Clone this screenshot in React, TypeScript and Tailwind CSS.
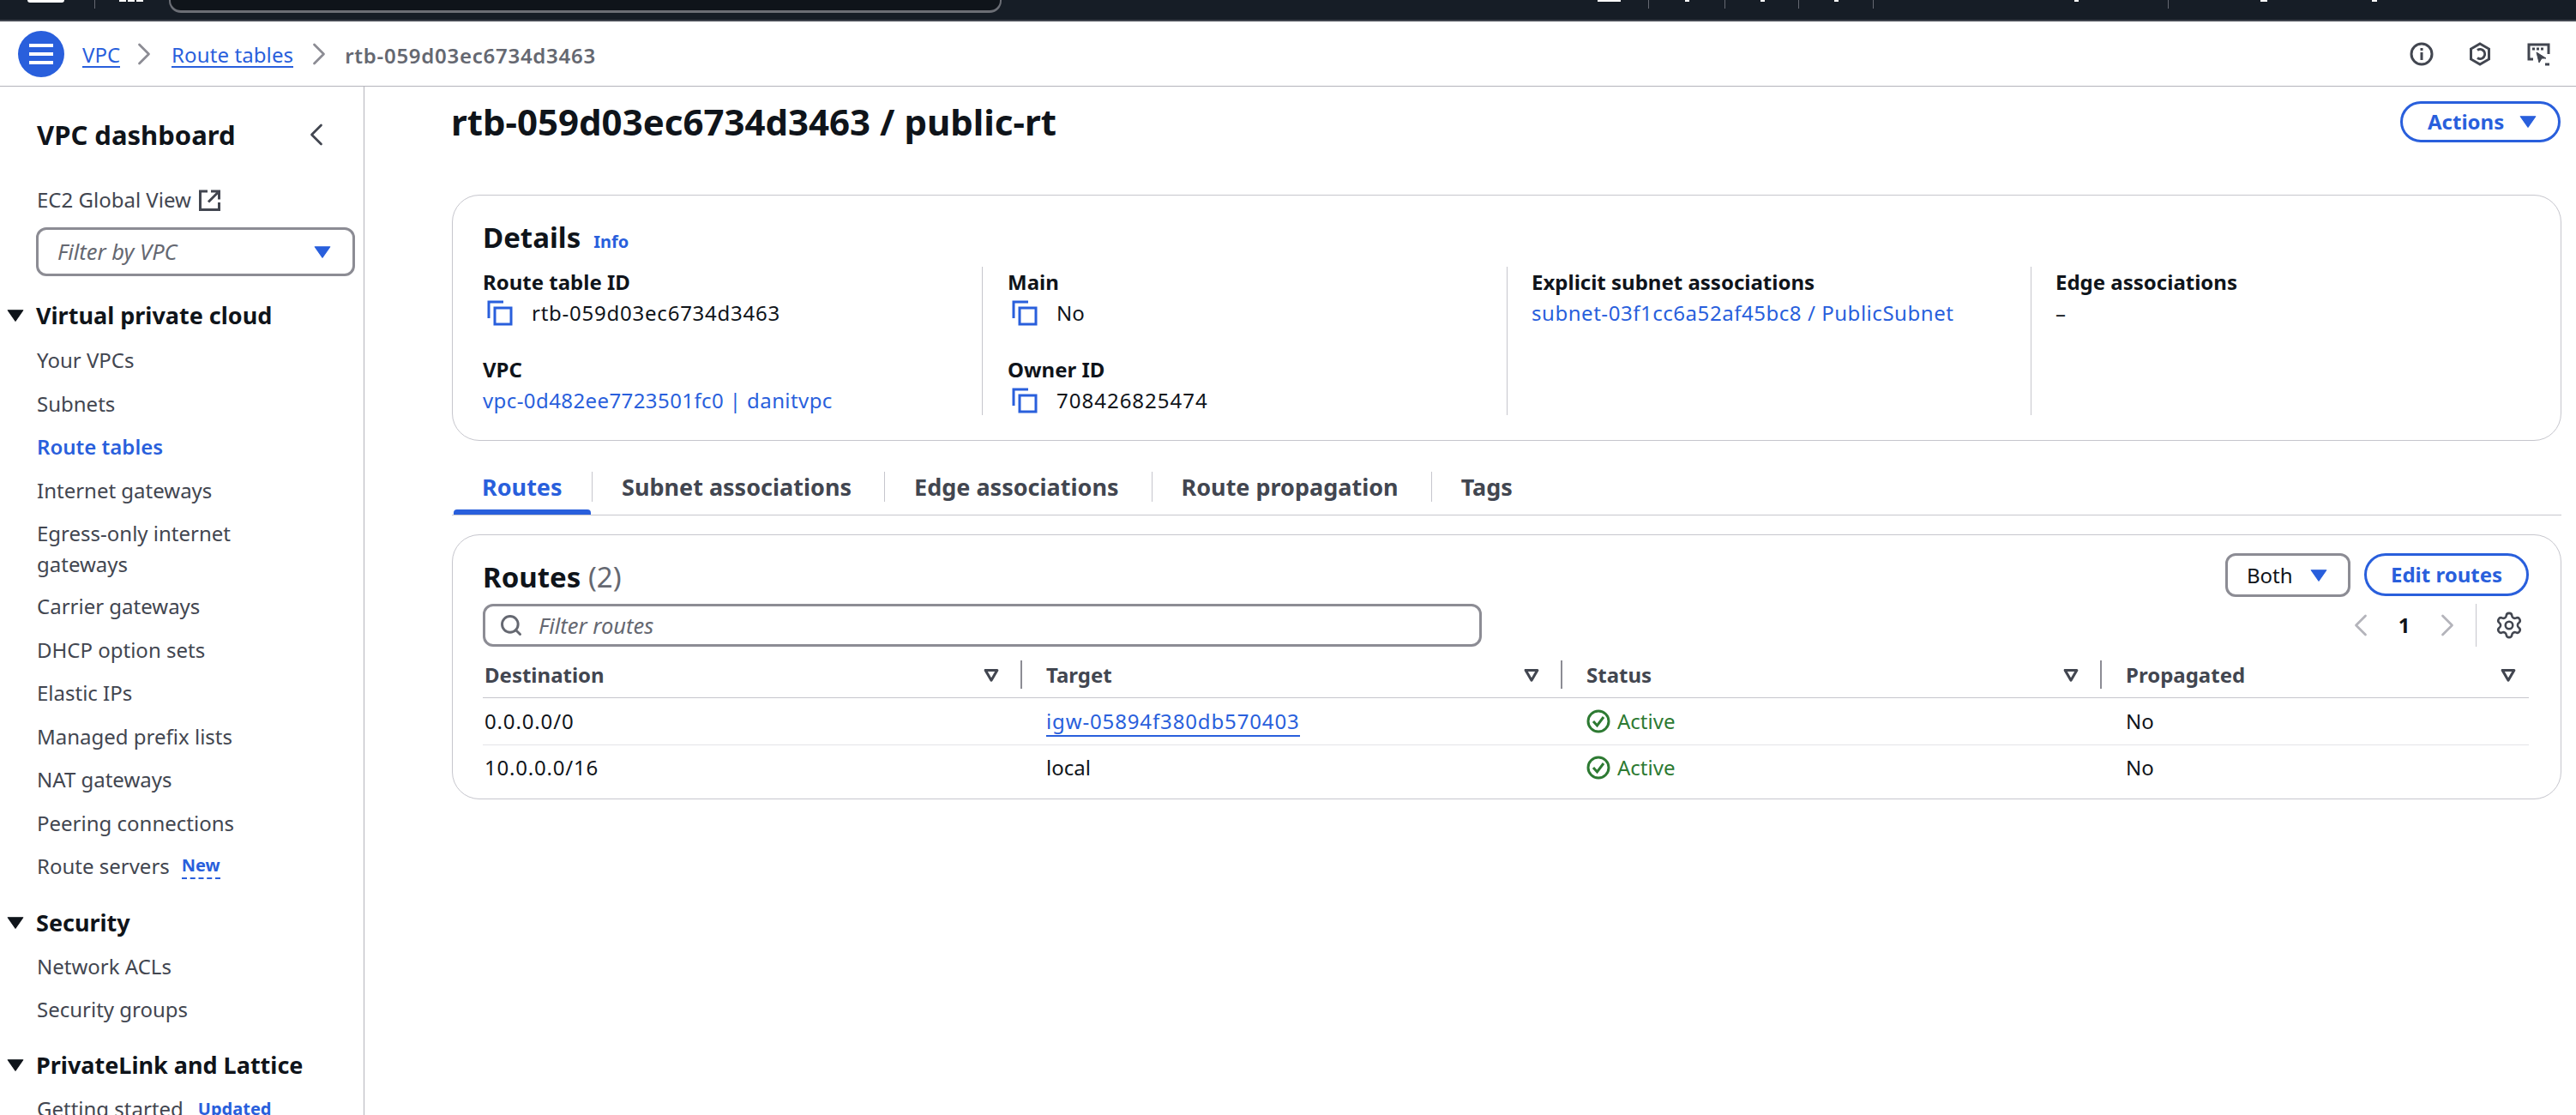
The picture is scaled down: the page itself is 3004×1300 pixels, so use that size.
import { ChevronLeft, ChevronRight, Search, Settings } from "lucide-react";

const font = "font-['Noto_Sans',sans-serif]";

function Caret({ className }: { className: string }) {
  return (
    <svg viewBox="0 0 16 16" className={className}>
      <path d="M1 3h14L8 13z" fill="currentColor" stroke="currentColor" strokeLinejoin="round" />
    </svg>
  );
}

function SortCaret() {
  return (
    <svg viewBox="0 0 16 16" className="h-[20px] w-[20px] text-[#424650]">
      <path d="M2.500 3.500h11L8 13z" fill="none" stroke="currentColor" strokeWidth="2.400" strokeLinejoin="round" />
    </svg>
  );
}

function CopyIcon() {
  return (
    <svg viewBox="0 0 30 30" className="h-[30px] w-[30px] text-[#295fdc]" fill="none" stroke="currentColor" strokeWidth="3">
      <path d="M2 21V2h17" />
      <rect x="9" y="9" width="19" height="19" />
    </svg>
  );
}

function ActiveIcon() {
  return (
    <svg viewBox="0 0 28 28" className="h-[28px] w-[28px] text-[#2d7a32]" fill="none" stroke="currentColor">
      <circle cx="14" cy="14" r="12" strokeWidth="3" />
      <path d="M8 14l4.500 5L20 9" strokeWidth="3" />
    </svg>
  );
}

function SideItem({ label, active, badge, dashed }: { label: string; active?: boolean; badge?: string; dashed?: boolean }) {
  return (
    <div className={`flex h-[50.500px] items-center gap-[14px] pl-[43px] text-[24px] ${active ? "font-semibold text-[#295fdc]" : "text-[#424650]"}`}>
      <span>{label}</span>
      {badge && (
        <span className={`text-[20px] font-bold text-[#295fdc] ${dashed ? "border-b-2 border-dashed border-[#295fdc] leading-[28px]" : "ml-[3px]"}`}>{badge}</span>
      )}
    </div>
  );
}

function SideGroup({ title }: { title: string }) {
  return (
    <div className="flex items-center text-[#0f141a]">
      <Caret className="ml-[8px] h-[20px] w-[20px]" />
      <span className="ml-[14px] text-[27px] font-bold leading-[36px]">{title}</span>
    </div>
  );
}

function Field({ label, children }: { label: string; children: React.ReactNode }) {
  return (
    <div>
      <div className="text-[24px] font-bold leading-[36px] text-[#0f141a]">{label}</div>
      <div className="flex h-[36px] items-center text-[24px] text-[#0f141a]">{children}</div>
    </div>
  );
}

function Copyable({ value, className }: { value: string; className?: string }) {
  return (
    <div className="flex items-center gap-[22px] pl-[5px]">
      <CopyIcon />
      <span className={className}>{value}</span>
    </div>
  );
}

function HeadCell({ label, width, divider }: { label: string; width: string; divider?: boolean }) {
  return (
    <div className={`flex items-center justify-between ${width}`}>
      <span className="pl-[2px] text-[24px] font-bold text-[#424650]">{label}</span>
      <div className="flex items-center">
        <SortCaret />
        {divider ? <div className="ml-[24px] mr-[26px] h-[33px] w-[2px] bg-[#8c8c94]" /> : <div className="w-[14px]" />}
      </div>
    </div>
  );
}

const tabs = ["Subnet associations", "Edge associations", "Route propagation", "Tags"];

export default function App() {
  return (
    <div className={`flex h-[1300px] w-[3004px] flex-col overflow-hidden bg-white ${font}`}>
      {/* top bar, mostly scrolled out of view */}
      <div className="flex h-[25px] shrink-0 items-start border-b-2 border-[#424650] bg-[#161d26]">
        <div className="ml-[32px] h-[3px] w-[43px] rounded-b-full bg-white" />
        <div className="ml-[35px] h-[10px] w-px bg-[#656871]" />
        <div className="ml-[28px] flex w-[28px] gap-[2px]">
          <span className="h-[2px] w-[8px] bg-white" />
          <span className="h-[2px] w-[8px] bg-white" />
          <span className="h-[2px] w-[8px] bg-white" />
        </div>
        <div className="ml-[30px] h-[15px] w-[971px] rounded-b-[14px] border-x-2 border-b-[3px] border-[#6b6e75] bg-[#0f141a]" />
        <div className="ml-[695px] h-[2px] w-[27px] bg-white" />
        <div className="ml-[32px] h-[10px] w-px bg-[#656871]" />
        <div className="ml-[42px] h-[2px] w-[5px] bg-white" />
        <div className="ml-[41px] h-[10px] w-px bg-[#656871]" />
        <div className="ml-[41px] h-[2px] w-[5px] bg-white" />
        <div className="ml-[39px] h-[10px] w-px bg-[#656871]" />
        <div className="ml-[41px] h-[2px] w-[5px] bg-white" />
        <div className="ml-[40px] h-[10px] w-px bg-[#656871]" />
        <div className="ml-[234px] h-[2px] w-[5px] bg-white" />
        <div className="ml-[104px] h-[10px] w-px bg-[#656871]" />
        <div className="ml-[107px] h-[2px] w-[8px] bg-white" />
        <div className="ml-[122px] h-[2px] w-[6px] bg-white" />
      </div>

      {/* breadcrumbs */}
      <div className="flex h-[76px] shrink-0 items-center border-b border-[#b4b4bb] pl-[21px] pr-[30px]">
        <div className="flex h-[54px] w-[54px] flex-col items-center justify-center gap-[6px] rounded-full bg-[#295fdc]">
          <span className="h-[4px] w-[28px] bg-white" />
          <span className="h-[4px] w-[28px] bg-white" />
          <span className="h-[4px] w-[28px] bg-white" />
        </div>
        <span className="ml-[21px] border-b-2 border-[#295fdc] pt-[3px] text-[24px] leading-[27px] text-[#295fdc]">VPC</span>
        <ChevronRight className="ml-[6px] mr-[10px] h-[44px] w-[44px] text-[#8c8c94]" strokeWidth={1.5} />
        <span className="border-b-2 border-[#295fdc] pt-[3px] text-[24px] leading-[27px] tracking-[0.1px] text-[#295fdc]">Route tables</span>
        <ChevronRight className="mx-[8px] h-[44px] w-[44px] text-[#8c8c94]" strokeWidth={1.5} />
        <span className="pt-[3px] text-[24px] font-semibold leading-[27px] tracking-[0.73px] text-[#656871]">rtb-059d03ec6734d3463</span>
        <div className="ml-auto flex items-center gap-[40px] text-[#424650]">
          <svg viewBox="0 0 28 28" className="h-[28px] w-[28px]" fill="none" stroke="currentColor" strokeWidth="3">
            <circle cx="14" cy="14" r="12" />
            <path d="M14 12v9M14 7v3" />
          </svg>
          <svg viewBox="0 0 28 28" className="h-[28px] w-[28px]" fill="none" stroke="currentColor" strokeWidth="3">
            <path d="M14 2l10.500 6v12L14 26 3.500 20V8z" />
            <path d="M11 9.500a5.500 5.500 0 1 1 0 9" />
          </svg>
          <svg viewBox="0 0 28 28" className="h-[28px] w-[28px]" fill="none" stroke="currentColor" strokeWidth="3">
            <path d="M26 14V3H3v17h5" />
            <path d="M7 8h3M12 8h3M17 8h3" />
            <path d="M12 12l3 12 3-5 5 0z" fill="currentColor" strokeWidth="1" />
            <path d="M22 26h5" />
          </svg>
        </div>
      </div>

      <div className="flex min-h-0 flex-1">
        {/* sidebar */}
        <aside className="w-[425px] shrink-0 border-r border-[#b4b4bb]">
          <div className="flex items-center justify-between pt-[34px] pl-[43px] pr-[33px]">
            <span className="text-[31px] font-bold leading-[40px] text-[#0f141a]">VPC dashboard</span>
            <ChevronLeft className="h-[44px] w-[44px] text-[#424650]" strokeWidth={1.5} />
          </div>
          <div className="mt-[37px] flex items-center gap-[9px] pl-[43px] text-[24px] leading-[34px] text-[#424650]">
            EC2 Global View
            <svg viewBox="0 0 25 25" className="h-[25px] w-[25px]" fill="none" stroke="currentColor" strokeWidth="3">
              <path d="M10 2H1.500v21.500h22V15M14 2h9.500v9.500M23 2.500L11 14.500" />
            </svg>
          </div>
          <div className="mt-[15px] ml-[42px] mr-[10px] flex h-[57px] items-center justify-between rounded-[12px] border-[3px] border-[#8c8c94] pl-[22px] pr-[25px]">
            <span className="text-[25.500px] italic text-[#656871]">Filter by VPC</span>
            <Caret className="h-[20px] w-[20px] text-[#295fdc]" />
          </div>
          <div className="mt-[28px]">
            <SideGroup title="Virtual private cloud" />
          </div>
          <div className="mt-[9px]">
            <SideItem label="Your VPCs" />
            <SideItem label="Subnets" />
            <SideItem label="Route tables" active />
            <SideItem label="Internet gateways" />
            <div className="flex h-[85px] items-center pl-[43px] text-[24px] leading-[36px] text-[#424650]">
              Egress-only internet
              <br />
              gateways
            </div>
            <SideItem label="Carrier gateways" />
            <SideItem label="DHCP option sets" />
            <SideItem label="Elastic IPs" />
            <SideItem label="Managed prefix lists" />
            <SideItem label="NAT gateways" />
            <SideItem label="Peering connections" />
            <SideItem label="Route servers" badge="New" dashed />
          </div>
          <div className="mt-[22px]">
            <SideGroup title="Security" />
          </div>
          <div className="mt-[8px]">
            <SideItem label="Network ACLs" />
            <SideItem label="Security groups" />
          </div>
          <div className="mt-[21px]">
            <SideGroup title="PrivateLink and Lattice" />
          </div>
          <div className="mt-[8px]">
            <SideItem label="Getting started" badge="Updated" />
          </div>
        </aside>

        {/* main */}
        <main className="min-w-0 flex-1 pl-[102px]">
          <div className="flex items-start justify-between pr-[18px] pt-[13px]">
            <h1 className="-ml-[1px] text-[42px] font-bold leading-[56px] text-[#0f141a]">rtb-059d03ec6734d3463 / public-rt</h1>
            <button className="mt-[4px] flex h-[48px] w-[187px] items-center rounded-full border-[3px] border-[#295fdc] pl-[29px] text-[24px] font-bold text-[#295fdc]">
              Actions
              <Caret className="ml-[18px] h-[20px] w-[20px]" />
            </button>
          </div>

          {/* details */}
          <section className="mt-[57px] mr-[17px] h-[287px] rounded-[32px] border border-[#c6c6cd] pl-[35px] pt-[25px]">
            <div className="flex items-baseline gap-[15px]">
              <h2 className="text-[33px] font-bold leading-[48px] text-[#0f141a]">Details</h2>
              <span className="text-[20px] font-bold text-[#295fdc]">Info</span>
            </div>
            <div className="mt-[10px] flex">
              <div className="flex h-[173px] w-[583px] flex-col gap-[30px] border-r border-[#c6c6cd]">
                <Field label="Route table ID"><Copyable value="rtb-059d03ec6734d3463" className="tracking-[0.76px]" /></Field>
                <Field label="VPC"><span className="tracking-[0.41px] text-[#295fdc]">vpc-0d482ee7723501fc0 | danitvpc</span></Field>
              </div>
              <div className="flex h-[173px] w-[612px] flex-col gap-[30px] border-r border-[#c6c6cd] pl-[29px]">
                <Field label="Main"><Copyable value="No" /></Field>
                <Field label="Owner ID"><Copyable value="708426825474" className="tracking-[1px]" /></Field>
              </div>
              <div className="h-[173px] w-[611px] border-r border-[#c6c6cd] pl-[28px]">
                <Field label="Explicit subnet associations"><span className="tracking-[0.54px] text-[#295fdc]">subnet-03f1cc6a52af45bc8 / PublicSubnet</span></Field>
              </div>
              <div className="pl-[28px]">
                <Field label="Edge associations"><span>–</span></Field>
              </div>
            </div>
          </section>

          {/* tabs */}
          <div className="mt-[36px] mr-[17px] flex h-[51px] border-b border-[#c6c6cd]">
            <div className="relative flex h-[35px] w-[164px] items-center border-r border-[#c6c6cd] pl-[35px] pt-[2px] text-[27px] font-bold text-[#295fdc]">
              Routes
              <div className="absolute top-[44px] left-[2px] h-[6px] w-[160px] rounded-t-[4px] bg-[#295fdc]" />
            </div>
            {tabs.map((t) => (
              <div key={t} className="flex h-[35px] items-center border-r border-[#c6c6cd] pl-[34px] pr-[38px] pt-[2px] text-[27px] font-bold text-[#424650] last:border-r-0">
                {t}
              </div>
            ))}
          </div>

          {/* routes table */}
          <section className="mt-[22px] mr-[17px] h-[309px] rounded-[32px] border border-[#c6c6cd] pl-[35px] pr-[37px] pt-[21px]">
            <div className="flex items-start justify-between">
              <h2 className="mt-[4px] text-[33px] font-bold leading-[48px] text-[#0f141a]">
                Routes <span className="font-normal text-[#656871]">(2)</span>
              </h2>
              <div className="flex items-start gap-[16px]">
                <div className="flex h-[51px] w-[146px] items-center gap-[20px] rounded-[12px] border-[3px] border-[#8c8c94] pl-[22px] text-[24px] text-[#0f141a]">
                  Both
                  <Caret className="h-[20px] w-[20px] text-[#295fdc]" />
                </div>
                <button className="flex h-[50px] w-[192px] items-center justify-center rounded-full border-[3px] border-[#295fdc] text-[24px] font-bold text-[#295fdc]">
                  Edit routes
                </button>
              </div>
            </div>
            <div className="mt-[7px] flex items-center">
              <div className="flex h-[50px] w-[1165px] items-center gap-[18px] rounded-[12px] border-[3px] border-[#8c8c94] pl-[16px]">
                <Search className="h-[28px] w-[28px] text-[#656871]" strokeWidth={2.5} />
                <span className="text-[25.500px] italic text-[#656871]">Filter routes</span>
              </div>
              <div className="ml-auto flex items-center">
                <ChevronLeft className="h-[44px] w-[44px] text-[#b4b4bb]" strokeWidth={1.5} />
                <span className="w-[57px] text-center text-[24px] font-bold text-[#0f141a]">1</span>
                <ChevronRight className="h-[44px] w-[44px] text-[#b4b4bb]" strokeWidth={1.5} />
                <div className="ml-[11px] h-[50px] w-px bg-[#c6c6cd]" />
                <Settings className="ml-[21px] mr-[6px] h-[34px] w-[34px] text-[#424650]" strokeWidth={1.8} />
              </div>
            </div>
            <div className="flex h-[60px] items-center border-b border-[#c6c6cd] pt-[6px]">
              <HeadCell label="Destination" width="w-[655px]" divider />
              <HeadCell label="Target" width="w-[630px]" divider />
              <HeadCell label="Status" width="w-[629px]" divider />
              <HeadCell label="Propagated" width="flex-1" />
            </div>
            <div className="flex h-[55px] items-center border-b border-[#e4e4e8] text-[24px] text-[#0f141a]">
              <span className="w-[655px] pl-[2px] tracking-[0.85px]">0.0.0.0/0</span>
              <span className="w-[630px] pl-[2px]"><span className="border-b-2 border-[#295fdc] tracking-[0.86px] text-[#295fdc]">igw-05894f380db570403</span></span>
              <span className="flex w-[629px] items-center gap-[8px] pl-[2px] text-[#2d7a32]"><ActiveIcon />Active</span>
              <span className="pl-[2px]">No</span>
            </div>
            <div className="flex h-[52px] items-center text-[24px] text-[#0f141a]">
              <span className="w-[655px] pl-[2px] tracking-[0.8px]">10.0.0.0/16</span>
              <span className="w-[630px] pl-[2px]">local</span>
              <span className="flex w-[629px] items-center gap-[8px] pl-[2px] text-[#2d7a32]"><ActiveIcon />Active</span>
              <span className="pl-[2px]">No</span>
            </div>
          </section>
        </main>
      </div>
    </div>
  );
}
